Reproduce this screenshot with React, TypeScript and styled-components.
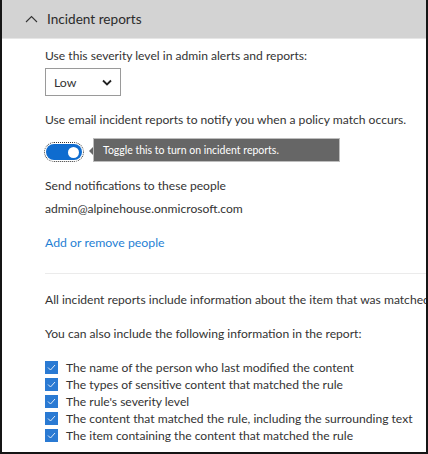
import React from 'react'
import styled, { createGlobalStyle } from 'styled-components'

const GlobalStyle = createGlobalStyle`
  html, body {
    margin: 0;
    padding: 0;
    background: #ffffff;
  }
  body {
    font-family: Lato, "Open Sans", "Liberation Sans", sans-serif;
    color: #333333;
  }
`

const Frame = styled.div`
  width: 428px;
  height: 454px;
  box-sizing: border-box;
  border: 2px solid #151515;
  border-top: none;
  overflow: hidden;
  background: #ffffff;
`

const Header = styled.div`
  height: 38px;
  display: flex;
  align-items: center;
  gap: 9px;
  padding-left: 23px;
  background: #d3d3d3;
  border-bottom: 1px solid #e6e6e6;
`

const Title = styled.div`
  font-size: 13.6px;
  color: #2b2b2b;
`

const Body = styled.div`
  padding-left: 43px;
  white-space: nowrap;
`

const Text = styled.div<{ $top: number }>`
  margin-top: ${(p) => p.$top}px;
  font-size: 12.1px;
  line-height: 18px;
  color: #333333;
`

const Link = styled(Text)`
  color: #1f7fd4;
  font-size: 12.3px;
`

const Select = styled.div`
  margin-top: 3px;
  width: 76px;
  height: 28px;
  box-sizing: border-box;
  border: 1px solid #9a9a9a;
  display: flex;
  align-items: center;
  justify-content: space-between;
  padding: 0 8px 0 8px;
  font-size: 12.3px;
  color: #333;
`

const ToggleRow = styled.div`
  margin-top: 9px;
  display: flex;
  align-items: flex-start;
  height: 24px;
`

const ToggleFocus = styled.div`
  margin-top: 5px;
  padding: 1px;
  outline: 1px dotted #333;
  border-radius: 10px;
`

const Toggle = styled.div`
  width: 36px;
  height: 16px;
  border-radius: 8px;
  background: #0f6ccf;
  display: flex;
  align-items: center;
  justify-content: flex-end;
  padding-right: 3px;
  box-sizing: border-box;
`

const Knob = styled.div`
  width: 11px;
  height: 11px;
  border-radius: 50%;
  background: #ffffff;
`

const Tooltip = styled.div`
  position: relative;
  margin-left: 10px;
  height: 24px;
  box-sizing: border-box;
  width: 247px;
  background: #666666;
  border: 1px solid #bdbdbd;
  color: #ffffff;
  font-size: 10.5px;
  display: flex;
  align-items: center;
  padding-left: 9px;

  &::before {
    content: '';
    position: absolute;
    left: -5px;
    top: 8px;
    border-top: 4px solid transparent;
    border-bottom: 4px solid transparent;
    border-right: 4px solid #666666;
  }
`

const Divider = styled.div`
  margin-top: 21px;
  height: 1px;
  background: #ebebeb;
`

const CheckList = styled.div`
  margin-top: 16px;
  display: flex;
  flex-direction: column;
`

const CheckRow = styled.div`
  display: flex;
  align-items: center;
  gap: 8px;
  height: 17px;
  font-size: 12.1px;
  color: #333;
`

const Box = styled.div`
  flex-shrink: 0;
  width: 13px;
  height: 13px;
  background: #2a7ad3;
  display: flex;
  align-items: center;
  justify-content: center;
`

const Chevron = () => (
  <svg width="13" height="8" viewBox="0 0 13 8">
    <path d="M1 7 L6.5 1.5 L12 7" fill="none" stroke="#333" strokeWidth="1.1" />
  </svg>
)

const DownChevron = () => (
  <svg width="10" height="7" viewBox="0 0 10 7">
    <path d="M1 1.5 L5 5.5 L9 1.5" fill="none" stroke="#222" strokeWidth="1.8" />
  </svg>
)

const Check = () => (
  <svg width="9" height="7" viewBox="0 0 9 7">
    <path d="M1 3.5 L3.5 6 L8 1" fill="none" stroke="#dfeaf7" strokeWidth="1" />
  </svg>
)

const extras = [
  'The name of the person who last modified the content',
  'The types of sensitive content that matched the rule',
  "The rule's severity level",
  'The content that matched the rule, including the surrounding text',
  'The item containing the content that matched the rule',
]

const App: React.FC = () => {
  return (
    <>
      <GlobalStyle />
      <Frame>
        <Header>
          <Chevron />
          <Title>Incident reports</Title>
        </Header>
        <Body>
          <Text $top={8}>Use this severity level in admin alerts and reports:</Text>
          <Select>
            <span>Low</span>
            <DownChevron />
          </Select>
          <Text $top={15}>Use email incident reports to notify you when a policy match occurs.</Text>
          <ToggleRow>
            <ToggleFocus>
              <Toggle>
                <Knob />
              </Toggle>
            </ToggleFocus>
            <Tooltip>Toggle this to turn on incident reports.</Tooltip>
          </ToggleRow>
          <Text $top={15}>Send notifications to these people</Text>
          <Text $top={5}>admin@alpinehouse.onmicrosoft.com</Text>
          <Link $top={16}>Add or remove people</Link>
          <Divider />
          <Text $top={17}>All incident reports include information about the item that was matched</Text>
          <Text $top={16}>You can also include the following information in the report:</Text>
          <CheckList>
            {extras.map((label) => (
              <CheckRow key={label}>
                <Box>
                  <Check />
                </Box>
                <span>{label}</span>
              </CheckRow>
            ))}
          </CheckList>
        </Body>
      </Frame>
    </>
  )
}

export default App
